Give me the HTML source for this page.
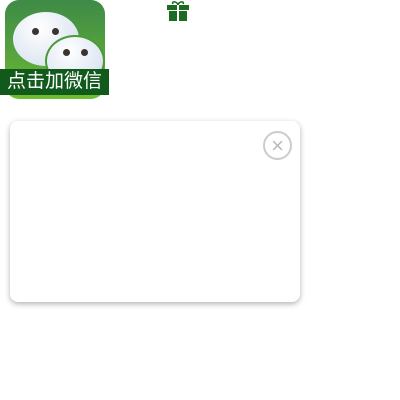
<!DOCTYPE html><html><head><style>
body{margin:0;width:400px;height:400px;background:#fff;position:relative;overflow:hidden;font-family:"Liberation Sans","Noto Sans CJK SC",sans-serif}
.icon{position:absolute;left:5px;top:0;width:100px;height:99px;border-radius:14px;background:linear-gradient(#3e8a47,#5aa63c 60%,#6fbf2f);overflow:hidden}
.b1{position:absolute;left:8px;top:12px;width:66px;height:54px;border-radius:50%;background:radial-gradient(circle at 40% 30%,#fff,#dde6f2 70%,#b9c9dc)}
.b2{position:absolute;left:40px;top:35px;width:56px;height:48px;border-radius:50%;background:radial-gradient(circle at 40% 30%,#fff,#dde6f2 70%,#b9c9dc);border:2px solid #4a9a35}
.d{position:absolute;width:7px;height:7px;border-radius:50%;background:#3a3330}
.ban{position:absolute;left:0;top:69px;width:109px;height:26px;background:#115a1c;color:#fff;font-size:19px;line-height:26px;text-align:center}
.modal{position:absolute;left:10px;top:121px;width:290px;height:181px;background:#fff;border-radius:8px;box-shadow:0 2px 6px rgba(0,0,0,.3)}
.x{position:absolute;left:253px;top:10px;width:25px;height:25px;border:2px solid #ccc;border-radius:50%;color:#bbb;font-size:22px;line-height:25px;text-align:center}
</style></head><body>
<div class="icon"><div class="b1"></div><div class="b2"></div>
<div class="d" style="left:27px;top:28px"></div><div class="d" style="left:47px;top:28px"></div>
<div class="d" style="left:58px;top:49px"></div><div class="d" style="left:76px;top:49px"></div></div>
<div class="ban">点击加微信</div>
<svg style="position:absolute;left:166px;top:0" width="24" height="22" viewBox="0 0 24 22"><path d="M7 4c-2-3 4-3 5 1c1-4 7-4 5-1" fill="none" stroke="#1b6b22" stroke-width="1.5"/><rect x="1" y="5" width="22" height="5" fill="#1b6b22"/><rect x="3" y="11" width="18" height="10" fill="#1b6b22"/><rect x="11" y="5" width="2" height="16" fill="#fff"/></svg>
<div class="modal"><div class="x">×</div></div>
</body></html>
